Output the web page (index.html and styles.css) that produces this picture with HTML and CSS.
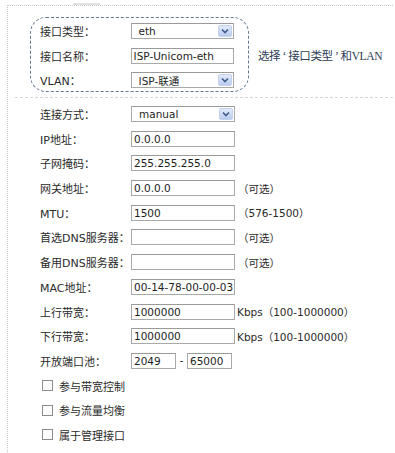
FILE: index.html
```html
<!DOCTYPE html>
<html lang="zh-CN">
<head>
<meta charset="utf-8">
<title>接口设置</title>
<link rel="stylesheet" href="styles.css">
</head>
<body>
<div class="topmark"></div>
<div class="panel">
  <div class="head">
    <div class="group">
      <div class="row"><span class="label">接口类型：</span><span class="field select"><span class="val">eth</span><span class="arrow"><svg width="8" height="6" viewBox="0 0 8 6"><path d="M1 1.5 L4 4.5 L7 1.5" fill="none" stroke="#3f5a8c" stroke-width="1.6"/></svg></span></span></div>
      <div class="row"><span class="label">接口名称：</span><span class="field"><span class="val">ISP-Unicom-eth</span></span></div>
      <div class="row"><span class="label">VLAN：</span><span class="field select"><span class="val">ISP-联通</span><span class="arrow"><svg width="8" height="6" viewBox="0 0 8 6"><path d="M1 1.5 L4 4.5 L7 1.5" fill="none" stroke="#3f5a8c" stroke-width="1.6"/></svg></span></span></div>
    </div>
    <div class="note">选择<span class="q">‘</span>接口类型<span class="q">’</span>和VLAN</div>
  </div>
  <div class="sep"></div>
  <div class="main">
    <div class="row"><span class="label">连接方式：</span><span class="field select"><span class="val">manual</span><span class="arrow"><svg width="8" height="6" viewBox="0 0 8 6"><path d="M1 1.5 L4 4.5 L7 1.5" fill="none" stroke="#3f5a8c" stroke-width="1.6"/></svg></span></span></div>
    <div class="row"><span class="label">IP地址：</span><span class="field"><span class="val">0.0.0.0</span></span></div>
    <div class="row"><span class="label">子网掩码：</span><span class="field"><span class="val">255.255.255.0</span></span></div>
    <div class="row"><span class="label">网关地址：</span><span class="field"><span class="val">0.0.0.0</span></span><span class="hint">（可选）</span></div>
    <div class="row"><span class="label">MTU：</span><span class="field"><span class="val">1500</span></span><span class="hint">（576-1500）</span></div>
    <div class="row"><span class="label">首选DNS服务器：</span><span class="field"><span class="val"></span></span><span class="hint">（可选）</span></div>
    <div class="row"><span class="label">备用DNS服务器：</span><span class="field"><span class="val"></span></span><span class="hint">（可选）</span></div>
    <div class="row"><span class="label">MAC地址：</span><span class="field"><span class="val">00-14-78-00-00-03</span></span></div>
    <div class="row"><span class="label">上行带宽：</span><span class="field"><span class="val">1000000</span></span><span class="hint kbps">Kbps（100-1000000）</span></div>
    <div class="row"><span class="label">下行带宽：</span><span class="field"><span class="val">1000000</span></span><span class="hint kbps">Kbps（100-1000000）</span></div>
    <div class="row"><span class="label">开放端口池：</span><span class="field short"><span class="val">2049</span></span><span class="dash">-</span><span class="field short"><span class="val">65000</span></span></div>
    <div class="row"><span class="check"></span><span class="ctext">参与带宽控制</span></div>
    <div class="row"><span class="check"></span><span class="ctext">参与流量均衡</span></div>
    <div class="row"><span class="check"></span><span class="ctext">属于管理接口</span></div>
  </div>
</div>
</body>
</html>
```
FILE: styles.css
```css
html, body {
  margin: 0;
  padding: 0;
  background: #ffffff;
}
body {
  width: 395px;
  height: 453px;
  overflow: hidden;
  font-family: "DejaVu Sans", "Noto Sans CJK SC", sans-serif;
  color: #2a2a2a;
}
.topmark {
  margin: 3px 0 0 73px;
  width: 27px;
  height: 2px;
  background: #e2e2e2;
}
.panel {
  margin-left: 7px;
  width: 385px;
  height: 460px;
  border-left: 1px dotted #c8c8c8;
  border-top: 1px dotted #c8c8c8;
}
.head {
  display: flex;
  align-items: center;
  padding: 11px 0 0 22px;
}
.group {
  flex: none;
  width: 203px;
  padding: 2px 14px 0 0;
  border: 1.5px dashed #637891;
  border-radius: 16px;
  display: flex;
  flex-direction: column;
  gap: 2.5px;
}
.group .label {
  padding-left: 9px;
  box-sizing: border-box;
  width: 100px;
}
.note {
  margin-left: 9px;
  font-family: "Liberation Serif", "Noto Sans CJK SC", serif;
  font-size: 11.5px;
  letter-spacing: -0.4px;
  color: #2e3c58;
  white-space: nowrap;
}
.note .q {
  display: inline-block;
  width: 8px;
  text-align: center;
  font-family: "Liberation Serif", serif;
}
.sep {
  margin: 5px 0 0 7px;
  border-top: 1px dashed #d4d4d4;
}
.main {
  display: flex;
  flex-direction: column;
  gap: 2.7px;
  padding: 5px 0 0 32px;
}
.row {
  display: flex;
  align-items: center;
  height: 22px;
}
.label {
  width: 91px;
  font-size: 11px;
  color: #2a2a2a;
  white-space: nowrap;
}
.field {
  box-sizing: border-box;
  width: 104px;
  height: 16px;
  border: 1px solid #a9a9a9;
  border-top-color: #9a9a9a;
  background: #fff;
  display: flex;
  align-items: center;
  font-size: 10.5px;
  color: #1e1e1e;
  padding-left: 2px;
}
.field.short {
  width: 45px;
}
.val {
  flex: 1;
  white-space: nowrap;
  overflow: hidden;
}
.select .val {
  padding-left: 5px;
}
.arrow {
  box-sizing: border-box;
  width: 14px;
  height: 12px;
  margin-right: 1px;
  border: 1px solid #c3d2ee;
  border-radius: 2px;
  background: linear-gradient(#e3ebfa, #b9cbee);
  display: flex;
  align-items: center;
  justify-content: center;
}
.hint {
  margin-left: 3px;
  font-size: 10.5px;
  color: #2a2a2a;
  white-space: nowrap;
}
.hint.kbps {
  margin-left: 2px;
}
.dash {
  width: 11px;
  text-align: center;
  font-size: 11px;
}
.check {
  box-sizing: border-box;
  width: 11px;
  height: 11px;
  margin-left: 2px;
  border: 1px solid #8c8c8c;
  background: #fbfbfb;
}
.ctext {
  margin-left: 6px;
  font-size: 11px;
  color: #2a2a2a;
}
```
